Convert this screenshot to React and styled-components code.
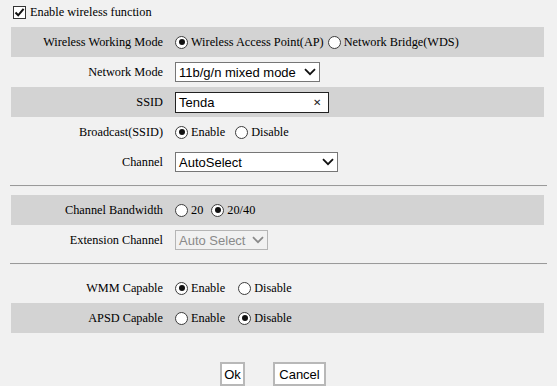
import React from "react";
import styled, { createGlobalStyle } from "styled-components";

const GlobalStyle = createGlobalStyle`
  html, body {
    margin: 0;
    padding: 0;
    background: #f1f1f1;
  }
  body {
    font-family: "Liberation Serif", "Times New Roman", serif;
    font-size: 12.3px;
    color: #000;
  }
`;

function Check() {
  return (
    <CheckBox>
      <svg width="11" height="11" viewBox="0 0 11 11">
        <path d="M1.5 5.5 L4.2 8.3 L9.6 1.8" fill="none" stroke="#111" strokeWidth="2" />
      </svg>
    </CheckBox>
  );
}

function Radio({ checked, label, gap }) {
  return (
    <Option $gap={gap}>
      <RadioDot $checked={checked} />
      <span>{label}</span>
    </Option>
  );
}

function Chevron({ color }) {
  return (
    <svg width="12" height="8" viewBox="0 0 12 8">
      <path d="M1 1.2 L6 6.2 L11 1.2" fill="none" stroke={color || "#111"} strokeWidth="1.8" />
    </svg>
  );
}

function Select({ value, width, disabled }) {
  return (
    <SelectBox $width={width} $disabled={disabled}>
      <span>{value}</span>
      <Chevron color={disabled ? "#8a8a8a" : "#111"} />
    </SelectBox>
  );
}

function Field({ label, shade, children }) {
  return (
    <Row $shade={shade}>
      <Label>{label}</Label>
      <Value>{children}</Value>
    </Row>
  );
}

export default function App() {
  return (
    <>
      <GlobalStyle />
      <Page>
        <Header>
          <Check />
          <span>Enable wireless function</span>
        </Header>

        <Group>
          <Field label="Wireless Working Mode" shade>
            <Radio checked label="Wireless Access Point(AP)" gap={4} />
            <Radio label="Network Bridge(WDS)" />
          </Field>
          <Field label="Network Mode">
            <Select value="11b/g/n mixed mode" width={145} />
          </Field>
          <Field label="SSID" shade>
            <TextInput>
              <span>Tenda</span>
              <Clear>✕</Clear>
            </TextInput>
          </Field>
          <Field label="Broadcast(SSID)">
            <Radio checked label="Enable" gap={10} />
            <Radio label="Disable" />
          </Field>
          <Field label="Channel">
            <Select value="AutoSelect" width={163} />
          </Field>
        </Group>

        <Divider />

        <Group>
          <Field label="Channel Bandwidth" shade>
            <Radio label="20" gap={8} />
            <Radio checked label="20/40" />
          </Field>
          <Field label="Extension Channel">
            <Select value="Auto Select" width={93} disabled />
          </Field>
        </Group>

        <Divider />

        <Group>
          <Field label="WMM Capable">
            <Radio checked label="Enable" gap={13} />
            <Radio label="Disable" />
          </Field>
          <Field label="APSD Capable" shade>
            <Radio label="Enable" gap={13} />
            <Radio checked label="Disable" />
          </Field>
        </Group>

        <Buttons>
          <Button $width={25}>Ok</Button>
          <Button $width={53}>Cancel</Button>
        </Buttons>
      </Page>
    </>
  );
}

const Page = styled.div`
  width: 537px;
  padding: 0 10px;
`;

const Header = styled.div`
  height: 27px;
  display: flex;
  align-items: center;
  gap: 4px;
  padding-left: 3px;
  padding-bottom: 3px;
  box-sizing: border-box;
`;

const CheckBox = styled.span`
  width: 13px;
  height: 13px;
  box-sizing: border-box;
  border: 1px solid #333;
  background: #fff;
  display: flex;
  align-items: center;
  justify-content: center;
`;

const Group = styled.div`
  margin-left: 1px;
  width: 533px;
`;

const Row = styled.div`
  display: grid;
  grid-template-columns: 160px 1fr;
  align-items: center;
  height: 30px;
  background: ${(p) => (p.$shade ? "#d3d3d3" : "transparent")};
`;

const Label = styled.div`
  text-align: right;
  padding-right: 8px;
  white-space: nowrap;
`;

const Value = styled.div`
  display: flex;
  align-items: center;
  padding-left: 4px;
`;

const Option = styled.label`
  display: flex;
  align-items: center;
  margin-right: ${(p) => p.$gap || 0}px;
  white-space: nowrap;
`;

const RadioDot = styled.span`
  width: 13px;
  height: 13px;
  box-sizing: border-box;
  border-radius: 50%;
  border: 1px solid #3c3c3c;
  background: #fff;
  margin-right: 3px;
  display: flex;
  align-items: center;
  justify-content: center;
  &::after {
    content: "";
    width: 6px;
    height: 6px;
    border-radius: 50%;
    background: #111;
    display: ${(p) => (p.$checked ? "block" : "none")};
  }
`;

const SelectBox = styled.div`
  width: ${(p) => p.$width}px;
  height: 20px;
  box-sizing: border-box;
  border: 1px solid ${(p) => (p.$disabled ? "#b5b5b5" : "#767676")};
  background: ${(p) => (p.$disabled ? "#f1f1f1" : "#fff")};
  color: ${(p) => (p.$disabled ? "#8a8a8a" : "#000")};
  font-family: "Liberation Sans", Arial, sans-serif;
  font-size: 13px;
  display: flex;
  align-items: center;
  justify-content: space-between;
  padding: 0 3px 0 3px;
`;

const TextInput = styled.div`
  width: 154px;
  height: 21px;
  box-sizing: border-box;
  border: 1px solid #222;
  background: #fff;
  font-family: "Liberation Sans", Arial, sans-serif;
  font-size: 13px;
  display: flex;
  align-items: center;
  justify-content: space-between;
  padding: 0 7px 0 3px;
`;

const Clear = styled.span`
  font-size: 10px;
  color: #222;
`;

const Divider = styled.hr`
  margin: 8px 0;
  border: 0;
  border-top: 1px solid #9a9a9a;
  border-bottom: 1px solid #eeeeee;
  height: 0;
`;

const Buttons = styled.div`
  display: flex;
  justify-content: center;
  gap: 28px;
  padding-top: 29px;
  padding-right: 11px;
`;

const Button = styled.button`
  width: ${(p) => p.$width}px;
  height: 24px;
  padding: 0;
  background: #fff;
  border: 2px solid #b8b8b8;
  border-radius: 0;
  font-family: "Liberation Sans", Arial, sans-serif;
  font-size: 13px;
  color: #000;
`;
